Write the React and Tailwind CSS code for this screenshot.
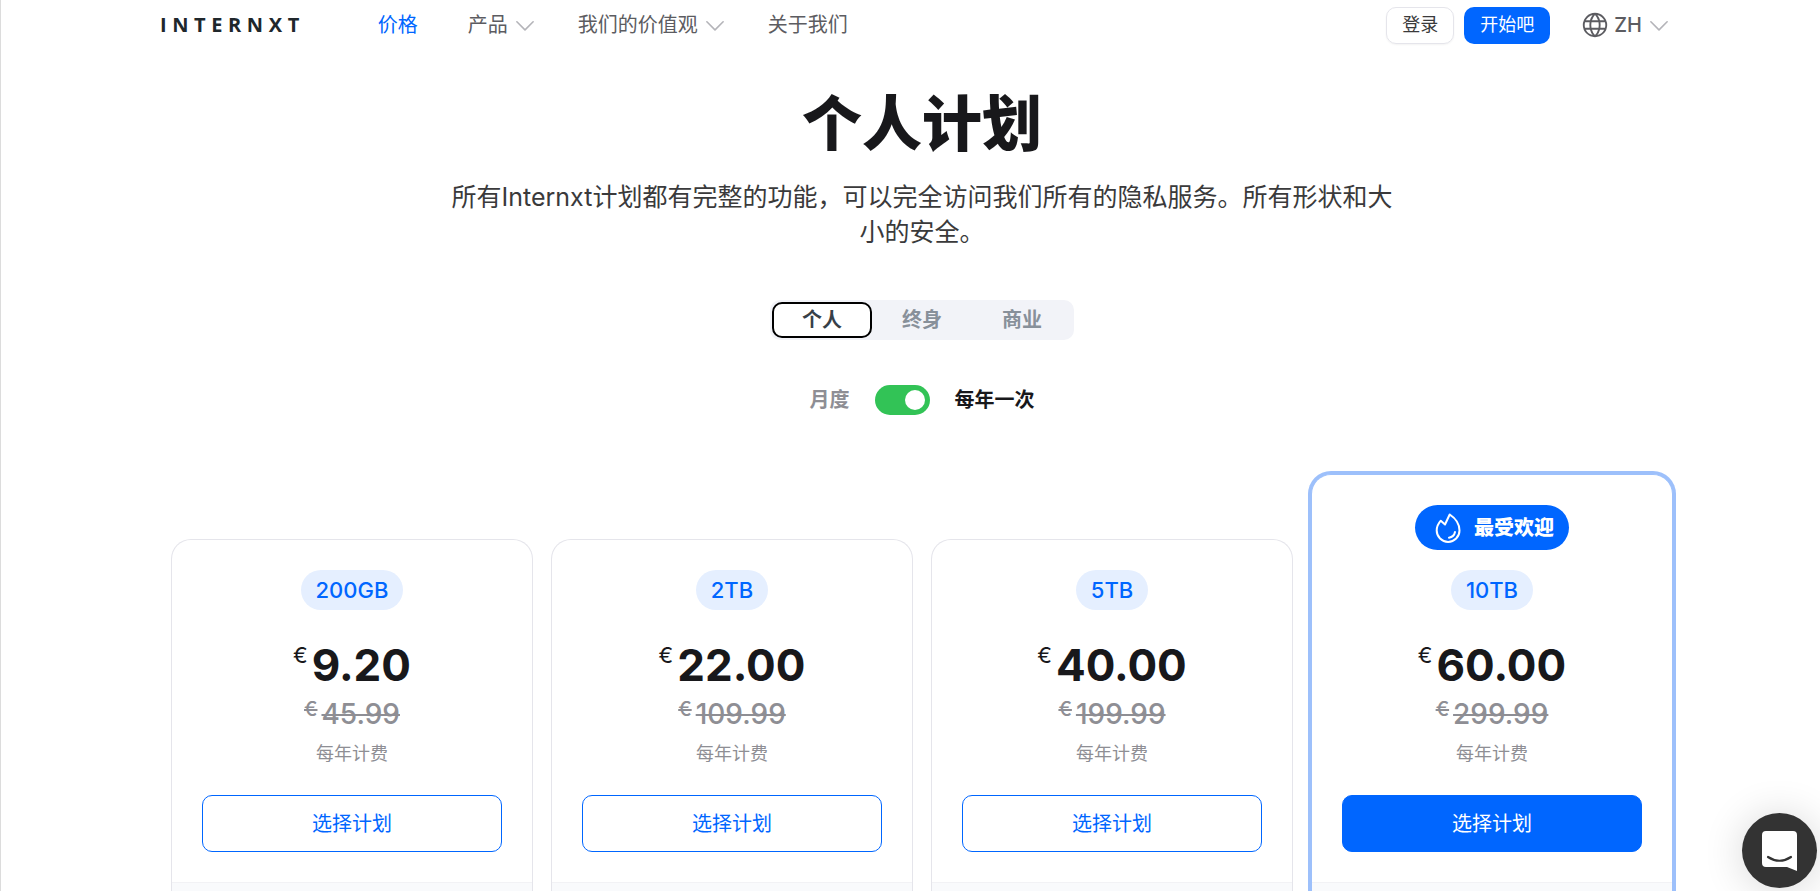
import { useState } from 'react';
import { PiCaretDown, PiGlobe } from 'react-icons/pi';

const NAV = [
  { label: '价格', active: true },
  { label: '产品', menu: true },
  { label: '我们的价值观', menu: true },
  { label: '关于我们' },
];

const TABS = ['个人', '终身', '商业'];

const PLANS = [
  { size: '200GB', price: '9.20', before: '45.99' },
  { size: '2TB', price: '22.00', before: '109.99' },
  { size: '5TB', price: '40.00', before: '199.99' },
  { size: '10TB', price: '60.00', before: '299.99', popular: true },
];

function Caret() {
  return <PiCaretDown className="h-[26px] w-[26px] text-[#b4b4b9]" aria-hidden="true" />;
}

function Flame() {
  return (
    <svg
      className="h-9 w-9"
      viewBox="0 0 36 36"
      fill="none"
      stroke="currentColor"
      strokeWidth="2"
      strokeLinecap="round"
      strokeLinejoin="round"
      aria-hidden="true"
    >
      <path d="M19.700 4.500C25 8 29.500 14 29.500 20.500A11.400 11.400 0 0 1 6.700 20.500C6.700 17 8.300 13.500 10.800 10.700L15 14.500Z" />
      <path d="M25 22C24.400 25 22 27.200 19 27.700" />
    </svg>
  );
}

function Navbar() {
  return (
    <header className="mx-auto flex h-[50px] w-full max-w-[1524px] shrink-0 items-center justify-between pr-3 text-xl text-[#5c5c61]">
      <div className="flex items-center">
        <a
          href="#"
          className="font-['Open_Sans'] font-bold tracking-[0.28em] text-[#20272c]"
        >
          INTERNXT
        </a>
        <nav className="ml-[73px] flex items-center">
          {NAV.map((item) =>
            item.menu ? (
              <button key={item.label} className="mr-10 flex items-center gap-1">
                {item.label}
                <Caret />
              </button>
            ) : (
              <a
                key={item.label}
                href="#"
                className={item.active ? 'mr-[50px] text-[#0066ff]' : ''}
              >
                {item.label}
              </a>
            )
          )}
        </nav>
      </div>

      <div className="flex items-center">
        <button className="h-[37px] rounded-[10px] border border-[#e5e5eb] px-[15px] text-lg text-[#3a3a3b] shadow-xs">
          登录
        </button>
        <button className="ml-[10px] h-[37px] rounded-[10px] bg-[#0066ff] px-4 text-lg text-white">
          开始吧
        </button>
        <button className="ml-[30px] flex items-center gap-1">
          <PiGlobe className="h-[30px] w-[30px]" aria-hidden="true" />
          <span className="font-medium">ZH</span>
          <Caret />
        </button>
      </div>
    </header>
  );
}

function PlanCard({ plan }) {
  return (
    <article
      className={`flex w-[362px] flex-col overflow-hidden rounded-t-[20px] border border-b-0 bg-white ${
        plan.popular
          ? 'border-[#9dc0fb] ring-3 ring-[#9dc0fb]'
          : 'mt-[65px] border-[#e5e5eb]'
      }`}
    >
      <div className="flex flex-col items-center p-[30px]">
        {plan.popular && (
          <div className="mb-5 flex h-[45px] items-center gap-2 rounded-full bg-[#0066ff] px-[15px] text-xl font-black text-white">
            <Flame />
            最受欢迎
          </div>
        )}
        <h2 className="flex h-10 items-center rounded-full bg-[#e5efff] px-[15px] text-[22px] font-medium text-[#0066ff]">
          {plan.size}
        </h2>
        <p className="mt-[30px] flex h-[50px] gap-1 text-[#18181b]">
          <span className="text-[22px] leading-[30px]">€</span>
          <span className="text-[44px] leading-[50px] font-bold">{plan.price}</span>
        </p>
        <p className="mt-1 flex h-10 gap-1 font-medium text-[#8e8e94] line-through">
          <span className="text-xl leading-[30px]">€</span>
          <span className="text-[28px] leading-10">{plan.before}</span>
        </p>
        <p className="text-lg leading-10 text-[#8e8e94]">每年计费</p>
        <button
          className={`mt-[21px] h-[57px] w-full rounded-[10px] border border-[#0066ff] text-xl ${
            plan.popular ? 'bg-[#0066ff] text-white' : 'bg-white text-[#0066ff]'
          }`}
        >
          选择计划
        </button>
      </div>
      <div className="min-h-2 flex-1 border-t border-[#f2f2f5] bg-[#f9fafc]" />
    </article>
  );
}

export default function App() {
  const [tab, setTab] = useState('个人');
  const [yearly, setYearly] = useState(true);

  return (
    <div
      lang="zh-CN"
      className="flex min-h-screen flex-col border-l border-[#dcdcdc] bg-white pl-[23px] font-[Inter,'Noto_Sans_CJK_SC',sans-serif]"
    >
      <Navbar />

      <main className="flex flex-1 flex-col items-center">
        <h1 className="mt-[37px] text-6xl leading-[75px] font-black text-[#18181b]">
          个人计划
        </h1>
        <p className="mt-[18px] max-w-[960px] text-center text-[25px] leading-[35px] text-[#3a3a3b]">
          所有Internxt计划都有完整的功能，可以完全访问我们所有的隐私服务。所有形状和大小的安全。
        </p>

        {/* Plan type */}
        <div className="mt-[50px] flex h-10 rounded-[10px] bg-[#f2f3f8] p-[2px] text-xl font-bold">
          {TABS.map((name) => (
            <button
              key={name}
              onClick={() => setTab(name)}
              className={`w-[100px] rounded-[10px] ${
                tab === name
                  ? 'border-2 border-black bg-white text-[#374048]'
                  : 'text-[#88909a]'
              }`}
            >
              {name}
            </button>
          ))}
        </div>

        {/* Billing period */}
        <label className="mt-[45px] flex h-[30px] items-center gap-[25px] text-xl font-bold">
          <span className={yearly ? 'text-[#8e8e94]' : 'text-[#18181b]'}>月度</span>
          <input
            type="checkbox"
            checked={yearly}
            onChange={(e) => setYearly(e.target.checked)}
            className="peer sr-only"
          />
          <span className="flex h-[30px] w-[55px] items-center rounded-full bg-[#d1d1d7] px-[5px] peer-checked:justify-end peer-checked:bg-[#32c356]">
            <span className="h-5 w-5 rounded-full bg-white" />
          </span>
          <span className={yearly ? 'text-[#18181b]' : 'text-[#8e8e94]'}>每年一次</span>
        </label>

        <section className="mt-[59px] flex flex-1 gap-[18px]">
          {PLANS.map((plan) => (
            <PlanCard key={plan.size} plan={plan} />
          ))}
        </section>
      </main>

      <button
        aria-label="聊天"
        className="fixed right-[3px] bottom-[3px] flex h-[75px] w-[75px] items-center justify-center rounded-full bg-[#333333] shadow-[0_2px_40px_rgba(0,0,0,0.16)]"
      >
        <svg className="h-10 w-[35px]" viewBox="0 0 35 40" fill="none" aria-hidden="true">
          <path d="M4 0H31Q35 0 35 4V40L25 36H4Q0 36 0 32V4Q0 0 4 0Z" fill="white" />
          <path
            d="M6 26Q17.500 33.500 29 26"
            stroke="#333333"
            strokeWidth="2.200"
            strokeLinecap="round"
          />
        </svg>
      </button>
    </div>
  );
}
